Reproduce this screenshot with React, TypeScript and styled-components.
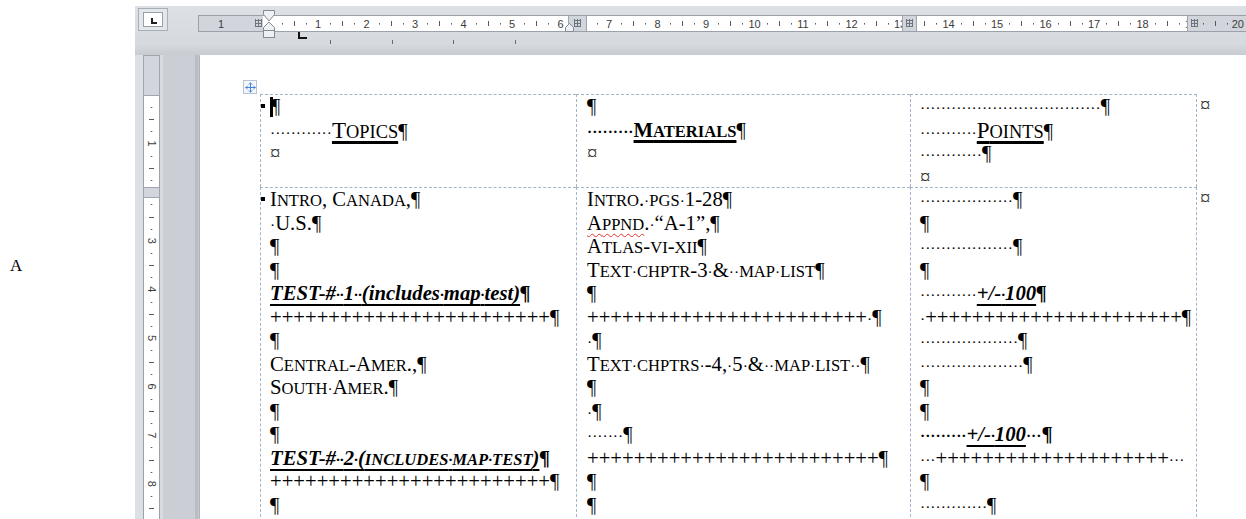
import React from "react";
import styled, { createGlobalStyle } from "styled-components";
import { Move } from "lucide-react";

const SERIF = `"Liberation Serif", "Times New Roman", serif`;
const SANS = `"Liberation Sans", Arial, sans-serif`;
const GRIDLINE = "#a4b3c7";

const GlobalStyle = createGlobalStyle`
  *, *::before, *::after { box-sizing: border-box; }
  html, body { margin: 0; padding: 0; background: #fff; overflow: hidden; }
  #root { width: 1246px; height: 519px; }
`;

const Screen = styled.div`
  display: flex;
  width: 1246px;
  height: 519px;
  overflow: hidden;
`;

const Gutter = styled.div`
  flex: none;
  width: 135px;
  display: flex;
  align-items: center;
  padding: 12px 0 0 10px;
  background: #fff;
  font-family: ${SERIF};
  font-size: 17px;
  color: #000;
`;

const Word = styled.div`
  flex: 1;
  min-width: 0;
  display: grid;
  grid-template-columns: 63px 1fr;
  grid-template-rows: 55px 1fr;
  background: #d4d8dd;
`;

const Band = styled.div`
  background: linear-gradient(#ffffff 0 6px, #dde0e4 6px, #d6dadf 44px, #c8ccd2 55px);
  overflow: hidden;
`;

const TabSelector = styled.div`
  margin: 8px 0 0 3px;
  width: 30px;
  height: 23px;
  border: 1px solid #a9afb7;
  background: #e3e6ea;
  display: flex;
  align-items: center;
  justify-content: center;
`;

const TabInner = styled.div`
  width: 20px;
  height: 15px;
  background: #fff;
  border: 1px solid #9aa0a8;
  display: flex;
  align-items: center;
  justify-content: center;
`;

const TabGlyph = styled.div`
  width: 6px;
  height: 6px;
  margin: 3px 0 0 1px;
  border-left: 2px solid #1e1e1e;
  border-bottom: 2px solid #1e1e1e;
`;

const Rail = styled.div`
  background: linear-gradient(
    to right,
    #dcdfe3 0 25px,
    #d8dbe0 25px 28px,
    #cbcfd5 28px 60px,
    #b9bec5 60px 63px
  );
  overflow: hidden;
`;

const PageArea = styled.div`
  overflow: hidden;
  position: relative;
`;

const Page = styled.div`
  margin-left: 2px;
  height: 100%;
  background: #fff;
  box-shadow: -1px 0 2px rgba(0, 0, 0, 0.25);
  padding: 39px 0 0 60px;
`;

const Table = styled.div`
  position: relative;
  display: grid;
  grid-template-columns: 316px 334px 287px 30px;
  grid-template-rows: 93px auto;
  font-family: ${SERIF};
  font-size: 20.7px;
  color: #000;
`;

const MoveHandle = styled.div`
  position: absolute;
  left: -17px;
  top: -14px;
  width: 14px;
  height: 14px;
  border: 1px solid #b8c3d2;
  background: #f3f6fa;
  display: flex;
  align-items: center;
  justify-content: center;
  color: #3b78d6;
`;

const Cell = styled.div<{ $last?: boolean; $pad?: number }>`
  border-top: 1px dashed ${GRIDLINE};
  border-left: 1px dashed ${GRIDLINE};
  border-right: ${(p) => (p.$last ? `1px dashed ${GRIDLINE}` : "none")};
  padding-left: ${(p) => p.$pad ?? 9}px;
  overflow: hidden;
`;

const RowEnd = styled.div`
  padding-left: 3px;
  color: #333;
`;

const Line = styled.div`
  height: 23.5px;
  line-height: 23.5px;
  white-space: pre;
`;

const Small = styled.span`
  font-size: 0.8em;
  text-transform: uppercase;
`;

const Dot = styled.span`
  font-size: 15.5px;
`;

const U = styled.span`
  text-decoration: underline;
  text-decoration-thickness: 2px;
  text-underline-offset: 4px;
  text-decoration-skip-ink: none;
`;

const Head = styled(U)<{ $bold?: boolean }>`
  font-size: ${(p) => (p.$bold ? "1em" : "23px")};
  font-weight: ${(p) => (p.$bold ? 700 : 400)};
  text-decoration-thickness: 2.5px;
  text-underline-offset: 3px;
`;

const BI = styled.span`
  font-weight: 700;
  font-style: italic;
`;

const B = styled.span`
  font-weight: 700;
`;

const Spell = styled.span`
  text-decoration: underline wavy #e0332e;
  text-decoration-thickness: 1px;
  text-underline-offset: 3px;
  text-decoration-skip-ink: none;
`;

const Bullet = styled.span`
  display: inline-block;
  width: 4px;
  height: 4px;
  background: #000;
  margin: 0 5px 0 -9px;
  vertical-align: 5px;
`;

const Cursor = styled.span`
  display: inline-block;
  width: 3px;
  height: 20px;
  background: #000;
  vertical-align: -4px;
  margin-right: -2px;
`;

const CellMark = styled.span`
  color: #333;
`;

const D = ({ n }: { n: number }) => <Dot>{"·".repeat(n)}</Dot>;
const plus = (n: number) => "+".repeat(n);

/* Word-style text: formatting dots for spaces; with `caps`, lowercase
   letters become reduced capitals (small caps) */
function T({ t, caps = false }: { t: string; caps?: boolean }) {
  const out: React.ReactNode[] = [];
  let buf = "";
  let kind = "n";
  let k = 0;
  const flush = () => {
    if (!buf) return;
    if (kind === "s") out.push(<Small key={k++}>{buf}</Small>);
    else if (kind === "d") out.push(<Dot key={k++}>{buf}</Dot>);
    else out.push(<React.Fragment key={k++}>{buf}</React.Fragment>);
    buf = "";
  };
  for (const ch of t) {
    const c = caps && /[a-z]/.test(ch) ? "s" : ch === "·" ? "d" : "n";
    if (c !== kind) {
      flush();
      kind = c;
    }
    buf += ch;
  }
  flush();
  return <>{out}</>;
}

const SC = ({ t }: { t: string }) => <T t={t} caps />;

/* ---------- rulers (drawings) ---------- */

const HZ = 71.5;
const HU = 48.5;

function GridMark({ x, y }: { x: number; y: number }) {
  const c = "#6e747c";
  return (
    <g stroke={c} strokeWidth={1} shapeRendering="crispEdges">
      {[0, 3, 6].map((d) => (
        <line key={"v" + d} x1={x + d + 0.5} y1={y} x2={x + d + 0.5} y2={y + 8} />
      ))}
      {[0, 3, 6].map((d) => (
        <line key={"h" + d} x1={x} y1={y + d + 1.5} x2={x + 7} y2={y + d + 1.5} />
      ))}
    </g>
  );
}

function Tick({ x, half }: { x: number; half: boolean }) {
  return half ? (
    <rect x={x} y={21} width={1} height={5} fill="#5a5a5a" />
  ) : (
    <rect x={x} y={23} width={1} height={1.6} fill="#5a5a5a" />
  );
}

function HorizontalRuler() {
  const ticks: React.ReactNode[] = [];
  for (let n = -2; n < 20; n++) {
    const b = HZ + n * HU;
    [0.25, 0.5, 0.75].forEach((q, i) => {
      const x = Math.round(b + q * HU);
      if (x < 2 || x > 1030) return;
      ticks.push(<Tick key={`${n}-${i}`} x={x} half={i === 1} />);
    });
  }
  const nums: React.ReactNode[] = [];
  for (let n = 1; n <= 19; n++) {
    nums.push(
      <text key={n} x={HZ + n * HU} y={24} textAnchor="middle" dominantBaseline="central">
        {n}
      </text>
    );
  }
  return (
    <svg width={1048} height={55} style={{ display: "block" }}>
      <rect x={0.5} y={15.5} width={1050} height={16} fill="#fff" stroke="#9aa1aa" />
      <g fill="#3c3c3c" fontFamily={SANS} fontSize={11}>
        {nums}
      </g>
      {ticks}
      <g fill="#d2d6dc">
        <rect x={1} y={16} width={64} height={15} />
        <rect x={370} y={16} width={19} height={15} />
        <rect x={704} y={16} width={15} height={15} />
        <rect x={989} y={16} width={59} height={15} />
      </g>
      <g stroke="#a0a6ae" shapeRendering="crispEdges">
        <line x1={370.5} y1={16} x2={370.5} y2={31} />
        <line x1={388.5} y1={16} x2={388.5} y2={31} />
        <line x1={704.5} y1={16} x2={704.5} y2={31} />
        <line x1={718.5} y1={16} x2={718.5} y2={31} />
        <line x1={989.5} y1={16} x2={989.5} y2={31} />
      </g>
      <g fill="#3c3c3c" fontFamily={SANS} fontSize={11}>
        <text x={HZ - HU} y={24} textAnchor="middle" dominantBaseline="central">1</text>
        <text x={1046} y={24} textAnchor="end" dominantBaseline="central">20</text>
      </g>
      {[0.25, 0.5, 0.75].map((q, i) => (
        <Tick key={"r" + i} x={Math.round(HZ + 19 * HU + q * HU)} half={i === 1} />
      ))}
      <GridMark x={57} y={19} />
      <GridMark x={376} y={19} />
      <GridMark x={708} y={19} />
      <GridMark x={993} y={19} />
      {/* indent hourglass */}
      <g fill="#eef0f3" stroke="#858b94" strokeWidth={1}>
        <polygon points="65.5,10.5 76.5,10.5 76.5,14.5 71,21 65.5,14.5" />
        <polygon points="71,22 76.5,27.5 76.5,30.5 65.5,30.5 65.5,27.5" />
        <rect x={65.5} y={30.5} width={11} height={7} />
      </g>
      {/* hanging indent marker of the next column */}
      <polygon points="367.5,31.5 367.5,27.5 371.5,23.5 375.5,27.5 375.5,31.5" fill="#eef0f3" stroke="#858b94" />
      {/* left tab stop */}
      <path d="M101 32 V38 H109" stroke="#111" strokeWidth={2} fill="none" />
      {/* default tab stops */}
      {[132, 194, 255, 317].map((x) => (
        <rect key={x} x={x} y={40} width={1} height={4} fill="#6b6b6b" />
      ))}
    </svg>
  );
}

const VZ = 40;
const VU = 48.6;

function VerticalRuler() {
  const cx = 16.5;
  const items: React.ReactNode[] = [];
  for (let n = 0; n < 10; n++) {
    const b = VZ + n * VU;
    [0.25, 0.5, 0.75].forEach((q, i) => {
      const y = Math.round(b + q * VU);
      if (y > 462) return;
      items.push(
        i === 1 ? (
          <rect key={`${n}-${i}`} x={cx - 2.5} y={y} width={5} height={1} fill="#5a5a5a" />
        ) : (
          <rect key={`${n}-${i}`} x={cx - 0.8} y={y} width={1.6} height={1} fill="#5a5a5a" />
        )
      );
    });
    if (n >= 1 && b < 450) {
      items.push(
        <text
          key={"t" + n}
          x={cx}
          y={b}
          textAnchor="middle"
          dominantBaseline="central"
          transform={`rotate(90 ${cx} ${b})`}
        >
          {n}
        </text>
      );
    }
  }
  return (
    <svg width={63} height={464} style={{ display: "block" }}>
      <rect x={8.5} y={0.5} width={16} height={470} fill="#fff" stroke="#9aa1aa" />
      <g fill="#3c3c3c" fontFamily={SANS} fontSize={11}>
        {items}
      </g>
      <g fill="#d2d6dc" stroke="#a0a6ae" shapeRendering="crispEdges">
        <rect x={8.5} y={0.5} width={16} height={40} />
        <rect x={8.5} y={132.5} width={16} height={10} />
      </g>
    </svg>
  );
}

/* ---------- document ---------- */

export default function App() {
  return (
    <>
      <GlobalStyle />
      <Screen>
        <Gutter>A</Gutter>
        <Word>
          <Band>
            <TabSelector>
              <TabInner>
                <TabGlyph />
              </TabInner>
            </TabSelector>
          </Band>
          <Band>
            <HorizontalRuler />
          </Band>
          <Rail>
            <VerticalRuler />
          </Rail>
          <PageArea>
            <Page>
              <Table>
                <MoveHandle>
                  <Move size={11} strokeWidth={2} />
                </MoveHandle>

                {/* header row */}
                <Cell>
                  <Line>
                    <Bullet />
                    <Cursor />¶
                  </Line>
                  <Line>
                    <D n={12} />
                    <Head>
                      <SC t="Topics" />
                    </Head>
                    ¶
                  </Line>
                  <Line>
                    <CellMark>¤</CellMark>
                  </Line>
                </Cell>
                <Cell $pad={10}>
                  <Line>¶</Line>
                  <Line>
                    <B>
                      <D n={9} />
                    </B>
                    <Head $bold>
                      <SC t="Materials" />
                    </Head>
                    ¶
                  </Line>
                  <Line>
                    <CellMark>¤</CellMark>
                  </Line>
                </Cell>
                <Cell $last>
                  <Line>
                    <D n={35} />¶
                  </Line>
                  <Line>
                    <D n={11} />
                    <Head>
                      <SC t="Points" />
                    </Head>
                    ¶
                  </Line>
                  <Line>
                    <D n={12} />¶
                  </Line>
                  <Line>
                    <CellMark>¤</CellMark>
                  </Line>
                </Cell>
                <RowEnd>
                  <Line>¤</Line>
                </RowEnd>

                {/* body row */}
                <Cell>
                  <Line>
                    <Bullet />
                    <SC t="Intro, Canada," />¶
                  </Line>
                  <Line>
                    <SC t="·U.S." />¶
                  </Line>
                  <Line>¶</Line>
                  <Line>¶</Line>
                  <Line>
                    <BI>
                      <U>
                        <T t="TEST-#··1··(includes·map·test)" />
                      </U>
                      ¶
                    </BI>
                  </Line>
                  <Line>{plus(24)}¶</Line>
                  <Line>¶</Line>
                  <Line>
                    <SC t="Central-Amer.," />¶
                  </Line>
                  <Line>
                    <SC t="South·Amer." />¶
                  </Line>
                  <Line>¶</Line>
                  <Line>¶</Line>
                  <Line>
                    <BI>
                      <U>
                        <T t="TEST-#··2·" />
                        <SC t="(includes·map·test)" />
                      </U>
                      ¶
                    </BI>
                  </Line>
                  <Line>{plus(24)}¶</Line>
                  <Line>¶</Line>
                </Cell>
                <Cell $pad={10}>
                  <Line>
                    <SC t="Intro.·pgs·1-28" />¶
                  </Line>
                  <Line>
                    <Spell>
                      <SC t="Appnd" />
                    </Spell>
                    <SC t=".·“A-1”," />¶
                  </Line>
                  <Line>
                    <SC t="Atlas-vi-xii" />¶
                  </Line>
                  <Line>
                    <SC t="Text·chptr-3·&··map·list" />¶
                  </Line>
                  <Line>¶</Line>
                  <Line>
                    {plus(24)}
                    <D n={1} />¶
                  </Line>
                  <Line>
                    <D n={1} />¶
                  </Line>
                  <Line>
                    <SC t="Text·chptrs·-4,·5·&··map·list··" />¶
                  </Line>
                  <Line>¶</Line>
                  <Line>
                    <D n={1} />¶
                  </Line>
                  <Line>
                    <D n={7} />¶
                  </Line>
                  <Line>{plus(25)}¶</Line>
                  <Line>¶</Line>
                  <Line>¶</Line>
                </Cell>
                <Cell $last>
                  <Line>
                    <D n={18} />¶
                  </Line>
                  <Line>¶</Line>
                  <Line>
                    <D n={18} />¶
                  </Line>
                  <Line>¶</Line>
                  <Line>
                    <D n={11} />
                    <BI>
                      <U>
                        <T t="+/-·100" />
                      </U>
                      ¶
                    </BI>
                  </Line>
                  <Line>
                    <D n={1} />
                    {plus(22)}¶
                  </Line>
                  <Line>
                    <D n={19} />¶
                  </Line>
                  <Line>
                    <D n={20} />¶
                  </Line>
                  <Line>¶</Line>
                  <Line>¶</Line>
                  <Line>
                    <B>
                      <D n={9} />
                      <BI>
                        <U>
                          <T t="+/-·100" />
                        </U>
                      </BI>
                      <D n={3} />¶
                    </B>
                  </Line>
                  <Line>
                    <D n={3} />
                    {plus(20)}
                    <D n={3} />
                  </Line>
                  <Line>¶</Line>
                  <Line>
                    <D n={13} />¶
                  </Line>
                </Cell>
                <RowEnd>
                  <Line>¤</Line>
                </RowEnd>
              </Table>
            </Page>
          </PageArea>
        </Word>
      </Screen>
    </>
  );
}
